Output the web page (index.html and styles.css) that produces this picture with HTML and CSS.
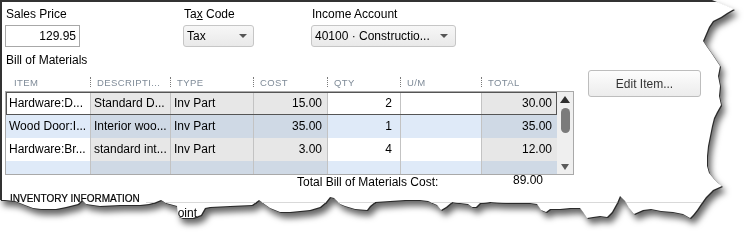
FILE: index.html
```html
<!DOCTYPE html>
<html lang="en">
<head>
    <meta charset="UTF-8">
    <meta name="viewport" content="width=device-width, initial-scale=1.0">
    <title>Edit Item - Bill of Materials</title>
    <link rel="stylesheet" href="styles.css">
</head>
<body>
    <div class="frame">
        <div class="paper">
            <div class="fields">
                <div class="field price">
                    <label>Sales Price</label>
                    <div class="input">129.95</div>
                </div>
                <div class="field tax">
                    <label>Ta<u>x</u> Code</label>
                    <div class="select tax-select"><span>Tax</span><span class="caret"></span></div>
                </div>
                <div class="field account">
                    <label>Income Account</label>
                    <div class="select account-select"><span>40100 · Constructio...</span><span class="caret"></span></div>
                </div>
            </div>

            <div class="section-label">Bill of Materials</div>

            <div class="bom">
                <div class="grid-wrap">
                    <div class="grid-head">
                        <div>ITEM</div>
                        <div class="sep">DESCRIPTI...</div>
                        <div class="sep">TYPE</div>
                        <div class="sep">COST</div>
                        <div class="sep">QTY</div>
                        <div class="sep">U/M</div>
                        <div class="sep">TOTAL</div>
                    </div>
                    <div class="grid">
                        <div class="rows">
                            <div class="row light selected">
                                <div class="cell ed">Hardware:D...</div>
                                <div class="cell ro">Standard D...</div>
                                <div class="cell ro">Inv Part</div>
                                <div class="cell ro num">15.00</div>
                                <div class="cell ed num qty">2</div>
                                <div class="cell ed"></div>
                                <div class="cell ro num">30.00</div>
                            </div>
                            <div class="row blue">
                                <div class="cell ed">Wood Door:I...</div>
                                <div class="cell ro">Interior woo...</div>
                                <div class="cell ro">Inv Part</div>
                                <div class="cell ro num">35.00</div>
                                <div class="cell ed num qty">1</div>
                                <div class="cell ed"></div>
                                <div class="cell ro num">35.00</div>
                            </div>
                            <div class="row light">
                                <div class="cell ed">Hardware:Br...</div>
                                <div class="cell ro">standard int...</div>
                                <div class="cell ro">Inv Part</div>
                                <div class="cell ro num">3.00</div>
                                <div class="cell ed num qty">4</div>
                                <div class="cell ed"></div>
                                <div class="cell ro num">12.00</div>
                            </div>
                            <div class="row blue">
                                <div class="cell ed"></div>
                                <div class="cell ro"></div>
                                <div class="cell ro"></div>
                                <div class="cell ro"></div>
                                <div class="cell ed"></div>
                                <div class="cell ed"></div>
                                <div class="cell ro"></div>
                            </div>
                        </div>
                        <div class="scrollbar">
                            <span class="arrow-up"></span>
                            <span class="thumb"></span>
                            <span class="arrow-down"></span>
                        </div>
                    </div>
                    <div class="total">
                        <span class="total-label">Total Bill of Materials Cost:</span>
                        <span class="total-amount">89.00</span>
                    </div>
                </div>
                <button class="edit">Edit Item...</button>
            </div>

            <div class="inventory">
                <span class="inventory-title">INVENTORY INFORMATION</span>
                <span class="inventory-line"></span>
            </div>
            <div class="inventory-row">Reorder Point</div>
        </div>
    </div>
</body>
</html>
```

FILE: styles.css
```css
* {
    box-sizing: border-box;
}
html, body {
    margin: 0;
    padding: 0;
    height: 100%;
    overflow: hidden;
    background: #fff;
}
body {
    font-family: "Liberation Sans", Arial, sans-serif;
    font-size: 12px;
    color: #000;
}

/* torn paper look */
.frame {
    width: 748px;
    height: 241px;
    filter: drop-shadow(1px 1px 0 #2b2b2b) drop-shadow(3px 5px 3px rgba(0, 0, 0, 0.6));
}
.paper {
    width: 748px;
    height: 241px;
    background: #fff;
    border-top: 2px solid #333;
    border-left: 2px solid #333;
    padding: 5px 0 0 3px;
    clip-path: polygon(0px 0px, 712px 0px, 722px 4px, 734px 9px, 727px 13px, 721px 17px, 713px 21px, 709px 27px, 706px 34px, 703px 41px, 707px 47px, 712px 54px, 716px 60px, 720px 66px, 718px 76px, 720px 86px, 719px 96px, 721px 105px, 717px 112px, 714px 118px, 712px 126px, 710px 136px, 708px 146px, 707px 156px, 707px 166px, 709px 173px, 714px 179px, 718px 183px, 722px 186px, 713px 190px, 706px 197px, 701px 204px, 697px 210px, 693px 215px, 690px 218px, 683px 214px, 673px 212px, 661px 211px, 651px 209px, 643px 210px, 634px 214px, 629px 208px, 625px 201px, 620px 196px, 617px 203px, 612px 212px, 607px 217px, 600px 216px, 593px 217px, 587px 218px, 583px 212px, 580px 208px, 570px 208px, 560px 209px, 550px 209px, 546px 212px, 541px 210px, 537px 204px, 530px 203px, 510px 203px, 490px 202px, 480px 203px, 476px 207px, 472px 207px, 468px 204px, 460px 203px, 452px 202px, 446px 207px, 441px 210px, 437px 205px, 428px 201px, 420px 200px, 405px 200px, 390px 201px, 375px 202px, 370px 206px, 367px 210px, 355px 209px, 345px 206px, 340px 204px, 334px 198px, 330px 197px, 326px 202px, 320px 207px, 310px 210px, 300px 211px, 290px 212px, 280px 212px, 270px 208px, 263px 203px, 259px 200px, 252px 205px, 230px 206px, 210px 207px, 205px 208px, 201px 215px, 193px 218px, 182px 218px, 178px 216px, 177px 206px, 166px 203px, 161px 200px, 156px 202px, 149px 204px, 140px 205px, 120px 205px, 100px 206px, 86px 204px, 82px 200px, 78px 204px, 66px 207px, 56px 209px, 41px 209px, 33px 208px, 25px 205px, 15px 201px, 5px 200px, 0px 200px);
}

/* top fields */
.fields {
    display: flex;
}
.field label {
    display: block;
    height: 14px;
    line-height: 14px;
    margin-bottom: 4px;
    padding-left: 1px;
}
.price {
    width: 178px;
}
.tax {
    width: 128px;
}
.input {
    width: 75px;
    height: 22px;
    border: 1px solid #a8a8a8;
    background: #fff;
    text-align: right;
    padding-right: 3px;
    line-height: 20px;
}
.select {
    height: 22px;
    border: 1px solid #c6c6c6;
    border-radius: 3px;
    background: linear-gradient(#f7f7f7, #e9e9e9);
    display: flex;
    align-items: center;
    justify-content: space-between;
    padding-left: 3px;
    line-height: 20px;
}
.tax-select {
    width: 71px;
    padding-right: 6px;
}
.account-select {
    width: 145px;
    padding-right: 7px;
}
.caret {
    width: 0;
    height: 0;
    border-left: 4px solid transparent;
    border-right: 4px solid transparent;
    border-top: 4px solid #555;
}

.section-label {
    margin-top: 6px;
    line-height: 14px;
    padding-left: 1px;
}

/* bill of materials grid */
.bom {
    display: flex;
    align-items: flex-start;
    margin-top: 3px;
}
.grid-wrap {
    width: 569px;
}
.grid-head, .row {
    display: grid;
    grid-template-columns: 84px 80px 83px 74px 73px 81px 76px;
}
.grid-head {
    height: 21px;
    margin-left: 1px;
    font-size: 9.5px;
    letter-spacing: 0.4px;
    color: #7f8b98;
}
.grid-head div {
    position: relative;
    padding: 8px 0 0 7px;
    line-height: 10px;
    white-space: nowrap;
}
.grid-head div:first-child {
    padding-left: 8px;
}
.grid-head .sep::before {
    content: "";
    position: absolute;
    left: 0;
    top: 7px;
    height: 10px;
    border-left: 1px dotted #7a7a7a;
}
.grid {
    display: flex;
    height: 84px;
    border: 1px solid #a9a9a9;
}
.rows {
    width: 551px;
    overflow: hidden;
}
.row {
    height: 23px;
    line-height: 23px;
}
.row.selected {
    outline: 1px solid #555;
    outline-offset: -1px;
}
.cell {
    border-left: 1px solid #c3c3c3;
    padding: 0 2px 0 3px;
    white-space: nowrap;
    overflow: hidden;
}
.cell:first-child {
    border-left: none;
}
.num {
    text-align: right;
    padding-right: 5px;
}
.qty {
    padding-right: 8px;
}
.light .ed {
    background: #fff;
}
.light .ro {
    background: #e7e7e7;
}
.blue .ed {
    background: #dfeaf8;
}
.blue .ro {
    background: #cfd9e5;
}
.scrollbar {
    width: 16px;
    background: #efefef;
    display: flex;
    flex-direction: column;
    align-items: center;
}
.arrow-up {
    margin-top: 4px;
    width: 0;
    height: 0;
    border-left: 5px solid transparent;
    border-right: 5px solid transparent;
    border-bottom: 7px solid #2e2e2e;
}
.thumb {
    margin-top: 5px;
    width: 9px;
    height: 25px;
    border-radius: 5px;
    background: #7b7b7b;
}
.arrow-down {
    margin-top: auto;
    margin-bottom: 4px;
    width: 0;
    height: 0;
    border-left: 4px solid transparent;
    border-right: 4px solid transparent;
    border-top: 6px solid #5a5a5a;
}
.total {
    display: flex;
    align-items: flex-start;
    padding-left: 292px;
    line-height: 14px;
}
.total-label {
    width: 216px;
}
.total-amount {
    margin-top: -2px;
}

.edit {
    margin-left: 14px;
    width: 113px;
    height: 27px;
    border: 1px solid #bdbdbd;
    border-radius: 3px;
    background: linear-gradient(#fdfdfd, #ececec);
    font-family: "Liberation Sans", Arial, sans-serif;
    font-size: 12px;
    color: #333;
    padding: 0;
}

/* inventory section */
.inventory {
    display: flex;
    align-items: flex-end;
    margin-top: 4px;
    padding-left: 5px;
}
.inventory-title {
    font-size: 10px;
    line-height: 12px;
    color: #000;
    -webkit-text-stroke: 0.2px #000;
}
.inventory-line {
    flex: 1;
    height: 1px;
    margin: 0 0 2px 6px;
    background: #d9d9d9;
}
.inventory-row {
    padding-left: 118px;
    line-height: 13px;
    margin-top: 2px;
}
```
